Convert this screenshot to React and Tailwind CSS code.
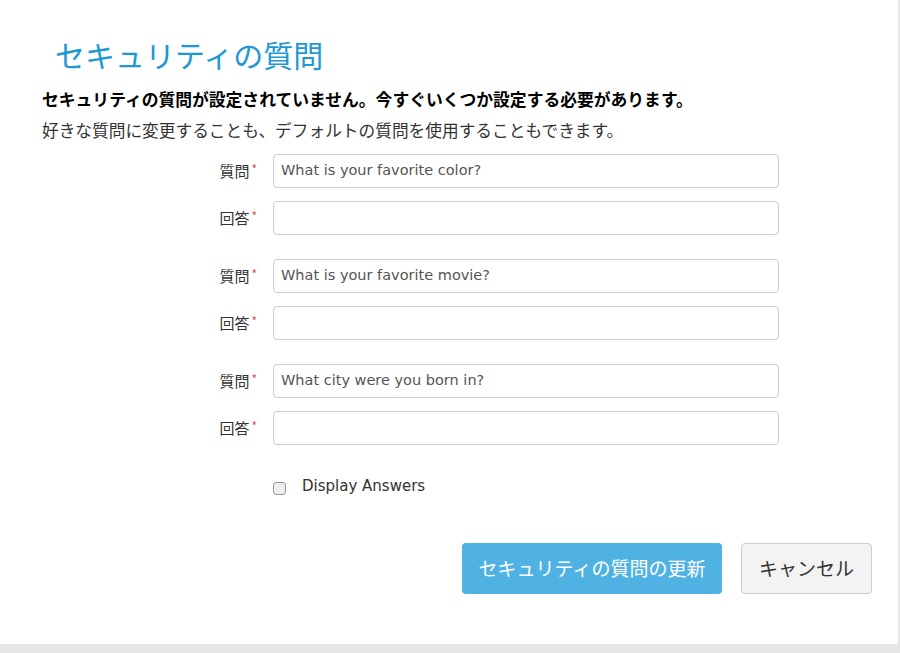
export default function App() {
  const jp = { fontFamily: '"Noto Sans CJK JP", "Noto Sans", sans-serif' };
  const en = { fontFamily: '"DejaVu Sans", "Noto Sans CJK JP", sans-serif' };
  const groups = ["What is your favorite color?", "What is your favorite movie?", "What city were you born in?"];
  const Row = ({ label, value }) => (
    <div className="flex items-center h-[34px]">
      <div className="w-[273px] pr-[16px] flex justify-end text-[15px] text-[#333]" style={jp}>
        {label}<span className="text-[#d9534f] text-[12px] ml-[2px]">*</span>
      </div>
      <div className="w-[506px] h-[34px] border border-[#ccc] rounded-[4px] bg-white px-[7px] flex items-center text-[14.5px] text-[#555]" style={en}>{value}</div>
    </div>
  );
  return (
    <div className="w-[900px] h-[653px] bg-[#e6e6e6] overflow-hidden" style={jp}>
      <div className="w-[898px] h-[644px] bg-white">
        <div className="pl-[55px] pt-[34px] text-[30px] leading-[40px] text-[#1d98d5]" style={jp}>セキュリティの質問</div>
        <div className="pl-[42px] mt-[14px] text-[16.8px] font-bold text-black leading-[22px] whitespace-nowrap">セキュリティの質問が設定されていません。今すぐいくつか設定する必要があります。</div>
        <div className="pl-[42px] mt-[9px] text-[16.7px] text-[#333] leading-[22px] whitespace-nowrap">好きな質問に変更することも、デフォルトの質問を使用することもできます。</div>
        <div className="mt-[13px] flex flex-col gap-[24px]">
          {groups.map((q) => (
            <div key={q} className="flex flex-col gap-[13px]">
              <Row label="質問" value={q} />
              <Row label="回答" value="" />
            </div>
          ))}
        </div>
        <div className="mt-[30px] pl-[273px] flex items-start">
          <div className="w-[13px] h-[13px] mt-[7px] border border-[#999] rounded-[3px] bg-[#eee]" />
          <span className="ml-[16px] text-[15px] text-[#333]" style={en}>Display Answers</span>
        </div>
        <div className="mt-[45px] flex justify-end pr-[26px] gap-[19px] items-center">
          <div className="w-[260px] h-[51px] rounded-[4px] bg-[#4fb2e3] text-white text-[19px] flex items-center justify-center">セキュリティの質問の更新</div>
          <div className="w-[131px] h-[51px] rounded-[4px] bg-[#f3f3f3] border border-[#ccc] text-[#333] text-[19px] flex items-center justify-center">キャンセル</div>
        </div>
      </div>
    </div>
  );
}
